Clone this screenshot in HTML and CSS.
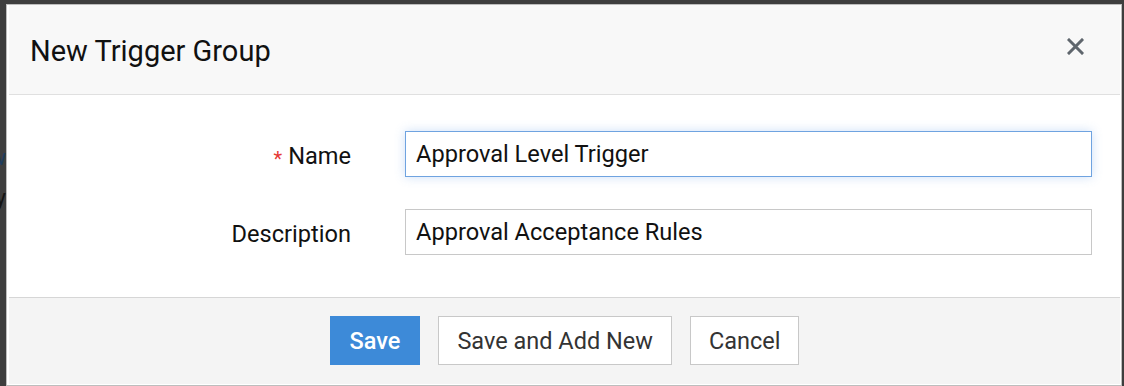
FILE: index.html
```html
<!DOCTYPE html>
<html lang="en">
<head>
  <meta charset="UTF-8">
  <title>New Trigger Group</title>
  <link rel="stylesheet" href="styles.css">
</head>
<body>

  <div class="page-edge">
    <div class="edge-line edge-link">Overview</div>
    <div class="edge-line">Activity</div>
  </div>

  <div class="modal">
    <div class="modal-header">
      <h2>New Trigger Group</h2>
      <button class="close-btn" title="Close">
        <svg width="17" height="17" viewBox="0 0 17 17">
          <path d="M2 2 L15 15 M15 2 L2 15" stroke="#5f666d" stroke-width="3" stroke-linecap="square" fill="none"/>
        </svg>
      </button>
    </div>

    <div class="modal-body">
      <div class="form-row">
        <label for="name"><span class="required">*</span>Name</label>
        <input type="text" id="name" class="focused" value="Approval Level Trigger" />
      </div>
      <div class="form-row">
        <label for="desc">Description</label>
        <input type="text" id="desc" value="Approval Acceptance Rules" />
      </div>
    </div>

    <div class="modal-footer">
      <button class="btn btn-primary">Save</button>
      <button class="btn">Save and Add New</button>
      <button class="btn">Cancel</button>
    </div>
  </div>

</body>
</html>
```

FILE: styles.css
```css
:root {
  --overlay: #3e3e3e;
  --accent: #3d8ad8;
  --border: #c8c8c8;
  --text: #111111;
  --font-main: 'Roboto', 'Liberation Sans', sans-serif;
}

body {
  margin: 0;
  padding-top: 4px;
  height: 386px;
  box-sizing: border-box;
  display: flex;
  overflow: hidden;
  background: var(--overlay);
  font-family: var(--font-main);
}

/* bits of the page behind the overlay */
.page-edge {
  width: 6px;
  flex-shrink: 0;
  overflow: hidden;
  padding-top: 134px;
}

.edge-line {
  display: flex;
  justify-content: flex-end;
  white-space: nowrap;
  font-size: 22px;
  line-height: 40px;
  color: #141414;
}

.edge-link {
  color: #1d3c5e;
}

.modal {
  width: 1116px;
  height: 382px;
  box-sizing: border-box;
  flex-shrink: 0;
  background: #ffffff;
  border: 1px solid #bdbdbd;
  padding: 0 1px 1px 2px;
  display: flex;
  flex-direction: column;
}

.modal-header {
  height: 89px;
  display: flex;
  align-items: center;
  justify-content: space-between;
  padding: 0 36px 0 21px;
  background: #f8f8f8;
  border-bottom: 1px solid #e0e0e0;
}

.modal-header h2 {
  margin: 0;
  padding-top: 3px;
  font-size: 29px;
  font-weight: 400;
  color: var(--text);
}

.close-btn {
  border: none;
  background: none;
  padding: 0;
  margin-top: -7px;
  width: 17px;
  height: 17px;
  cursor: pointer;
}

.close-btn svg {
  display: block;
}

.modal-body {
  height: 202px;
  box-sizing: border-box;
  padding: 36px 28px 0 0;
  display: flex;
  flex-direction: column;
  gap: 32px;
}

.form-row {
  display: grid;
  grid-template-columns: 342px 1fr;
  column-gap: 54px;
  align-items: center;
}

.form-row label {
  text-align: right;
  font-size: 23.6px;
  color: var(--text);
  padding-top: 4px;
}

.required {
  color: #e53935;
  font-size: 20px;
  margin-right: 6px;
  position: relative;
  top: 2px;
}

.form-row input {
  height: 46px;
  box-sizing: border-box;
  border: 1px solid var(--border);
  border-radius: 0;
  padding: 0 10px;
  font-family: var(--font-main);
  font-size: 23.6px;
  color: var(--text);
  outline: none;
}

.form-row input.focused {
  border-color: #6fa3e0;
  box-shadow: 0 0 10px rgba(90, 150, 230, 0.3);
}

.modal-footer {
  flex: 1;
  display: flex;
  justify-content: center;
  align-items: flex-start;
  gap: 18px;
  padding-top: 18px;
  background: #f4f4f4;
  border-top: 1px solid #d6d6d6;
}

.btn {
  height: 49px;
  padding: 0 18px;
  font-family: var(--font-main);
  font-size: 23.5px;
  color: #333333;
  background: #ffffff;
  border: 1px solid var(--border);
  cursor: pointer;
}

.btn-primary {
  padding: 0 19px;
  background: var(--accent);
  border-color: var(--accent);
  color: #ffffff;
  font-weight: 500;
}
```
